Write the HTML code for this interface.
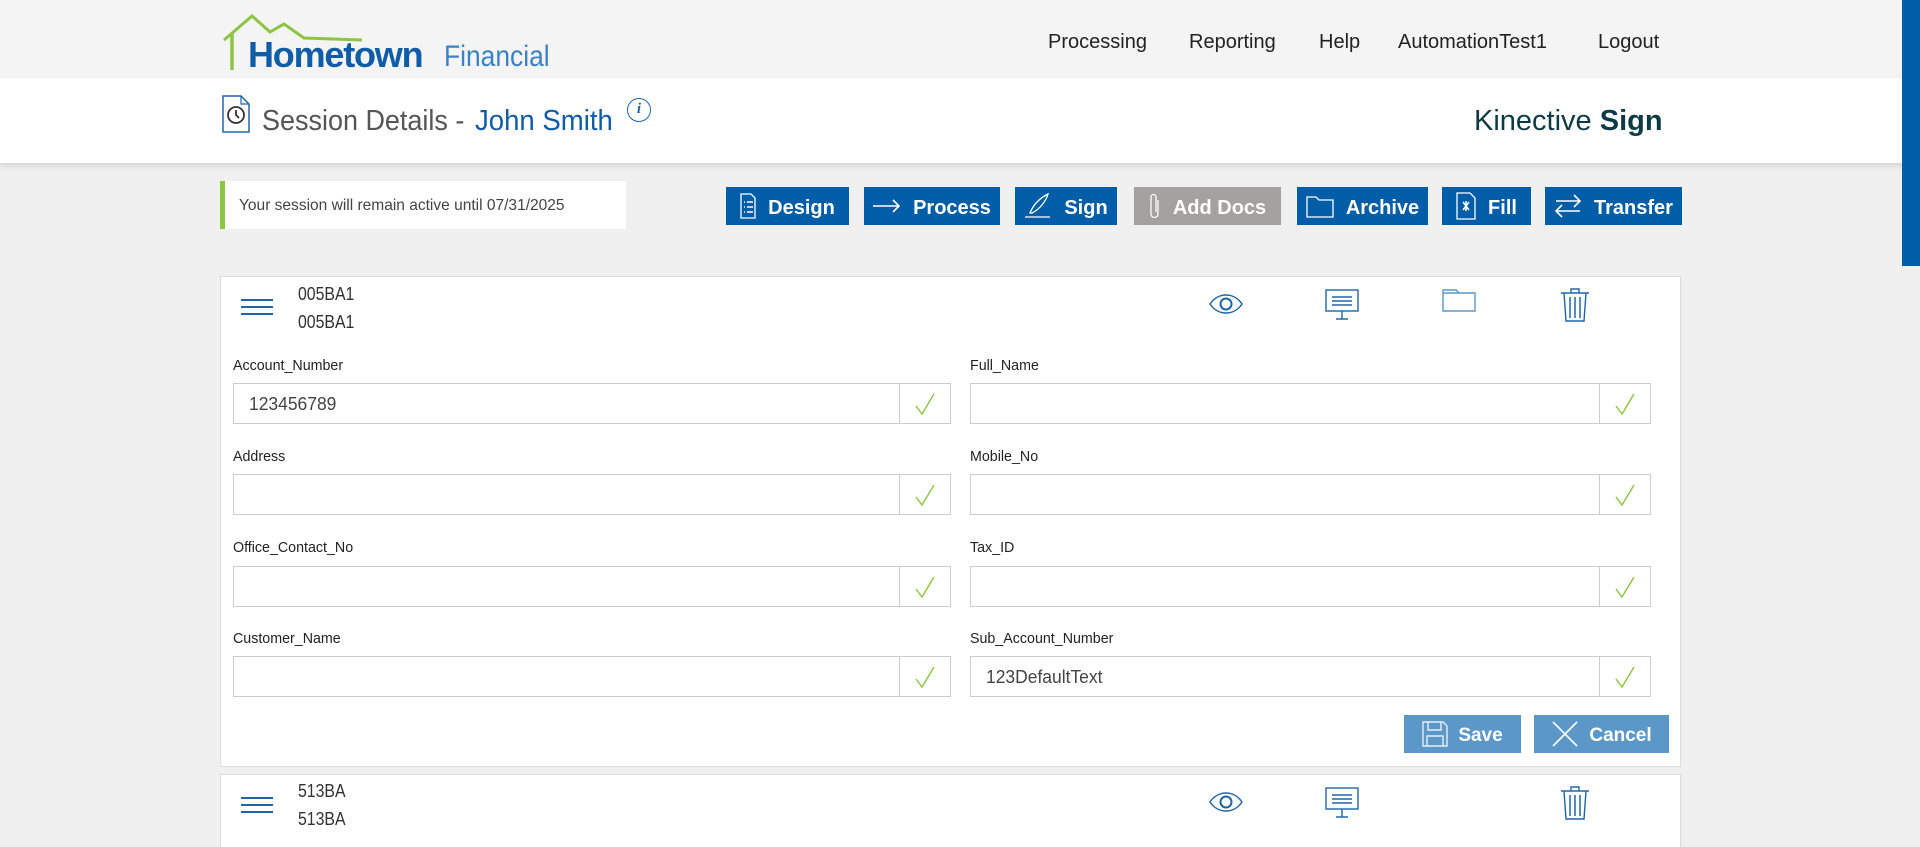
<!DOCTYPE html>
<html><head><meta charset="utf-8">
<style>
*{margin:0;padding:0;box-sizing:border-box}
html,body{width:1920px;height:847px;overflow:hidden}
body{background:#f0f0f0;font-family:"Liberation Sans",sans-serif;position:relative;color:#333}
.a{position:absolute}
.top{left:0;top:0;width:1920px;height:78px;background:#f4f4f4}
.sub{left:0;top:78px;width:1920px;height:85px;background:#fff;box-shadow:0 3px 6px rgba(0,0,0,.12)}
.nav{top:31px;font-size:20px;color:#222}
.cond{display:inline-block;transform:scaleX(.88);transform-origin:left center;white-space:nowrap}
.btn{top:187px;height:38px;background:#005ea8;color:#fff;font-weight:bold;font-size:20px;display:flex;align-items:center;justify-content:center;gap:12px;padding-top:5px}
.btn svg{flex:none;margin-top:-5px}
.card{background:#fff;border:1px solid #ddd}
.lbl{font-size:15px;color:#222}
.inp{height:41px;border:1px solid #ccc;background:#fff}
.inp .ck{position:absolute;right:0;top:0;width:51px;height:39px;border-left:1px solid #ccc;display:flex;align-items:center;justify-content:center}
.inp .v{position:absolute;left:15px;top:10px;font-size:18px;color:#444}
.ham{width:32px;height:16px;border-top:2px solid #1f66a8;border-bottom:2px solid #1f66a8}
.ham:after{content:"";position:absolute;left:0;top:5px;width:32px;height:2px;background:#1f66a8}
.code{font-size:18px;color:#333}
.sbtn{top:715px;height:38px;background:#5b98c8;color:#fff;font-weight:bold;font-size:19px;display:flex;align-items:center;justify-content:center;gap:10px;padding-top:3px}
.sbtn svg{margin-top:-3px}
</style></head><body>
<div class="a top"></div>
<div class="a sub"></div>
<div class="a" style="left:1902px;top:0;width:18px;height:266px;background:#005ea8"></div>

<!-- logo -->
<svg class="a" style="left:222px;top:14px" width="140" height="58" viewBox="0 0 140 58">
<polyline points="2,26 30,2 48,18 62,10 82,24 140,26" fill="none" stroke="#8cc540" stroke-width="3"/>
<line x1="10" y1="20" x2="10" y2="56" stroke="#8cc540" stroke-width="3.5"/>
</svg>
<div class="a" style="left:248px;top:34px;font-size:36px;font-weight:bold;color:#0f5ca8;letter-spacing:-1.2px;white-space:nowrap">Hometown</div>
<div class="a" style="left:444px;top:40px;font-size:30px;color:#3a82c4"><span class="cond">Financial</span></div>

<div class="a nav" style="left:1048px">Processing</div>
<div class="a nav" style="left:1189px">Reporting</div>
<div class="a nav" style="left:1319px">Help</div>
<div class="a nav" style="left:1398px">AutomationTest1</div>
<div class="a nav" style="left:1598px">Logout</div>

<!-- session details -->
<svg class="a" style="left:222px;top:95px" width="28" height="38" viewBox="0 0 28 38">
<path d="M1,1 H19 L27,9 V37 H1 Z" fill="none" stroke="#1f66a8" stroke-width="1.5"/>
<path d="M19,1 V9 H27" fill="none" stroke="#1f66a8" stroke-width="1.2"/>
<circle cx="14" cy="20" r="8" fill="none" stroke="#333" stroke-width="1.8"/>
<path d="M14,15 V20 L17,23" fill="none" stroke="#333" stroke-width="1.8"/>
</svg>
<div class="a" style="left:262px;top:105px;font-size:29px;color:#555"><span class="cond" style="transform:scaleX(.93)">Session Details -</span></div>
<div class="a" style="left:475px;top:105px;font-size:29px;color:#0f5ca8"><span class="cond" style="transform:scaleX(.95)">John Smith</span></div>
<div class="a" style="left:627px;top:98px;width:24px;height:24px;border:1.5px solid #1f66a8;border-radius:50%;color:#1f66a8;font:italic bold 15px 'Liberation Serif',serif;text-align:center;line-height:21px">i</div>
<div class="a" style="left:1474px;top:105px;font-size:29px;color:#0d3b45">Kinective <b>Sign</b></div>

<!-- notice -->
<div class="a" style="left:220px;top:181px;width:406px;height:48px;background:#fff;border-left:5px solid #8cc540"></div>
<div class="a" style="left:239px;top:197px;font-size:16px;color:#444"><span class="cond" style="transform:scaleX(.97)">Your session will remain active until 07/31/2025</span></div>

<!-- buttons -->
<div class="a btn" style="left:726px;width:123px"><svg width="16" height="26" viewBox="0 0 16 26"><path d="M1,1H11L15,5V25H1Z" fill="none" stroke="#fff" stroke-width="1.3"/><path d="M4,9h1M7,9h6M4,14h1M7,14h6M4,19h1M7,19h6" stroke="#fff" stroke-width="1.5"/></svg><span>Design</span></div>
<div class="a btn" style="left:864px;width:136px"><svg width="28" height="14" viewBox="0 0 28 14"><path d="M0,7H26M20,1L26,7L20,13" fill="none" stroke="#fff" stroke-width="1.6"/></svg><span>Process</span></div>
<div class="a btn" style="left:1015px;width:102px"><svg width="28" height="26" viewBox="0 0 28 26"><path d="M6,20 C10,10 18,4 24,1 C22,8 16,16 8,20Z" fill="none" stroke="#fff" stroke-width="1.3"/><path d="M1,24H26" stroke="#fff" stroke-width="1.3"/></svg><span>Sign</span></div>
<div class="a btn" style="left:1134px;width:147px;background:#a3a2a0"><svg width="12" height="28" viewBox="0 0 12 28"><path d="M9,8V22a3.5,3.5 0 0 1-7,0V5a2.5,2.5 0 0 1 5,0V20" fill="none" stroke="#fff" stroke-width="1.3"/></svg><span>Add Docs</span></div>
<div class="a btn" style="left:1297px;width:131px"><svg width="28" height="24" viewBox="0 0 28 24"><path d="M1,3H10L13,6H27V23H1Z" fill="none" stroke="#fff" stroke-width="1.3"/></svg><span>Archive</span></div>
<div class="a btn" style="left:1442px;width:89px"><svg width="20" height="28" viewBox="0 0 20 28"><path d="M1,1H14L19,6V27H1Z" fill="none" stroke="#fff" stroke-width="1.3"/><path d="M7,10L13,18M13,10L7,18M10,9V19" stroke="#fff" stroke-width="1.5"/></svg><span>Fill</span></div>
<div class="a btn" style="left:1545px;width:137px"><svg width="28" height="24" viewBox="0 0 28 24"><path d="M2,7H26M20,1L26,7L20,13M26,17H2M8,11L2,17L8,23" fill="none" stroke="#fff" stroke-width="1.6"/></svg><span>Transfer</span></div>

<!-- card 1 -->
<div class="a card" style="left:220px;top:276px;width:1461px;height:491px"></div>
<div class="a ham" style="left:241px;top:299px"></div>
<div class="a code" style="left:298px;top:284px"><span class="cond">005BA1</span></div>
<div class="a code" style="left:298px;top:312px"><span class="cond">005BA1</span></div>

<svg class="a" style="left:1208px;top:292px" width="36" height="24" viewBox="0 0 36 24"><path d="M2,12 C10,0 26,0 34,12 C26,24 10,24 2,12Z" fill="none" stroke="#1f66a8" stroke-width="1.5"/><circle cx="18" cy="12" r="5.5" fill="none" stroke="#1f66a8" stroke-width="2"/></svg>
<svg class="a" style="left:1325px;top:289px" width="34" height="32" viewBox="0 0 34 32"><rect x="1" y="1" width="32" height="21" fill="none" stroke="#1f66a8" stroke-width="1.4"/><path d="M7,8H27M7,12H27M7,16H27" stroke="#1f66a8" stroke-width="1.6"/><path d="M17,22V30M11,30H23" stroke="#1f66a8" stroke-width="1.4"/></svg>
<svg class="a" style="left:1442px;top:288px" width="34" height="24" viewBox="0 0 34 24"><path d="M1,2H14L17,5H33V23H1Z M1,5H17" fill="none" stroke="#5b98c8" stroke-width="1.4"/></svg>
<svg class="a" style="left:1560px;top:288px" width="30" height="34" viewBox="0 0 30 34"><path d="M1,5H29M11,5V1H19V5M4,5L6,33H24L26,5" fill="none" stroke="#1f66a8" stroke-width="1.4"/><path d="M10,9V30M15,9V30M20,9V30" stroke="#1f66a8" stroke-width="1.5"/></svg>

<!-- fields -->
<div class="a lbl" style="left:233px;top:357px"><span class="cond" style="transform:scaleX(.95)">Account_Number</span></div>
<div class="a lbl" style="left:970px;top:357px"><span class="cond" style="transform:scaleX(.95)">Full_Name</span></div>
<div class="a lbl" style="left:233px;top:448px"><span class="cond" style="transform:scaleX(.95)">Address</span></div>
<div class="a lbl" style="left:970px;top:448px"><span class="cond" style="transform:scaleX(.95)">Mobile_No</span></div>
<div class="a lbl" style="left:233px;top:539px"><span class="cond" style="transform:scaleX(.95)">Office_Contact_No</span></div>
<div class="a lbl" style="left:970px;top:539px"><span class="cond" style="transform:scaleX(.95)">Tax_ID</span></div>
<div class="a lbl" style="left:233px;top:630px"><span class="cond" style="transform:scaleX(.95)">Customer_Name</span></div>
<div class="a lbl" style="left:970px;top:630px"><span class="cond" style="transform:scaleX(.95)">Sub_Account_Number</span></div>

<div class="a inp" style="left:233px;top:383px;width:718px"><div class="v"><span class="cond" style="transform:scaleX(.97)">123456789</span></div><div class="ck"><svg width="20" height="22"><path d="M1,13L7,21L19,1" fill="none" stroke="#8cc540" stroke-width="1.4"/></svg></div></div>
<div class="a inp" style="left:970px;top:383px;width:681px"><div class="ck"><svg width="20" height="22"><path d="M1,13L7,21L19,1" fill="none" stroke="#8cc540" stroke-width="1.4"/></svg></div></div>
<div class="a inp" style="left:233px;top:474px;width:718px"><div class="ck"><svg width="20" height="22"><path d="M1,13L7,21L19,1" fill="none" stroke="#8cc540" stroke-width="1.4"/></svg></div></div>
<div class="a inp" style="left:970px;top:474px;width:681px"><div class="ck"><svg width="20" height="22"><path d="M1,13L7,21L19,1" fill="none" stroke="#8cc540" stroke-width="1.4"/></svg></div></div>
<div class="a inp" style="left:233px;top:566px;width:718px"><div class="ck"><svg width="20" height="22"><path d="M1,13L7,21L19,1" fill="none" stroke="#8cc540" stroke-width="1.4"/></svg></div></div>
<div class="a inp" style="left:970px;top:566px;width:681px"><div class="ck"><svg width="20" height="22"><path d="M1,13L7,21L19,1" fill="none" stroke="#8cc540" stroke-width="1.4"/></svg></div></div>
<div class="a inp" style="left:233px;top:656px;width:718px"><div class="ck"><svg width="20" height="22"><path d="M1,13L7,21L19,1" fill="none" stroke="#8cc540" stroke-width="1.4"/></svg></div></div>
<div class="a inp" style="left:970px;top:656px;width:681px"><div class="v"><span class="cond" style="transform:scaleX(.97)">123DefaultText</span></div><div class="ck"><svg width="20" height="22"><path d="M1,13L7,21L19,1" fill="none" stroke="#8cc540" stroke-width="1.4"/></svg></div></div>

<div class="a sbtn" style="left:1404px;width:117px"><svg width="26" height="26" viewBox="0 0 26 26"><path d="M1,1H21L25,5V25H1Z" fill="none" stroke="#e6eff7" stroke-width="1.4"/><path d="M6,1V9H19V1M5,25V15H21V25" fill="none" stroke="#e6eff7" stroke-width="1.4"/></svg><span>Save</span></div>
<div class="a sbtn" style="left:1534px;width:135px"><svg width="28" height="28" viewBox="0 0 28 28"><path d="M2,2L26,26M26,2L2,26" stroke="#fff" stroke-width="1.6"/></svg><span>Cancel</span></div>

<!-- card 2 -->
<div class="a card" style="left:220px;top:774px;width:1461px;height:110px"></div>
<div class="a ham" style="left:241px;top:797px"></div>
<div class="a code" style="left:298px;top:781px"><span class="cond">513BA</span></div>
<div class="a code" style="left:298px;top:809px"><span class="cond">513BA</span></div>
<svg class="a" style="left:1208px;top:790px" width="36" height="24" viewBox="0 0 36 24"><path d="M2,12 C10,0 26,0 34,12 C26,24 10,24 2,12Z" fill="none" stroke="#1f66a8" stroke-width="1.5"/><circle cx="18" cy="12" r="5.5" fill="none" stroke="#1f66a8" stroke-width="2"/></svg>
<svg class="a" style="left:1325px;top:787px" width="34" height="32" viewBox="0 0 34 32"><rect x="1" y="1" width="32" height="21" fill="none" stroke="#1f66a8" stroke-width="1.4"/><path d="M7,8H27M7,12H27M7,16H27" stroke="#1f66a8" stroke-width="1.6"/><path d="M17,22V30M11,30H23" stroke="#1f66a8" stroke-width="1.4"/></svg>
<svg class="a" style="left:1560px;top:786px" width="30" height="34" viewBox="0 0 30 34"><path d="M1,5H29M11,5V1H19V5M4,5L6,33H24L26,5" fill="none" stroke="#1f66a8" stroke-width="1.4"/><path d="M10,9V30M15,9V30M20,9V30" stroke="#1f66a8" stroke-width="1.5"/></svg>
</body></html>
